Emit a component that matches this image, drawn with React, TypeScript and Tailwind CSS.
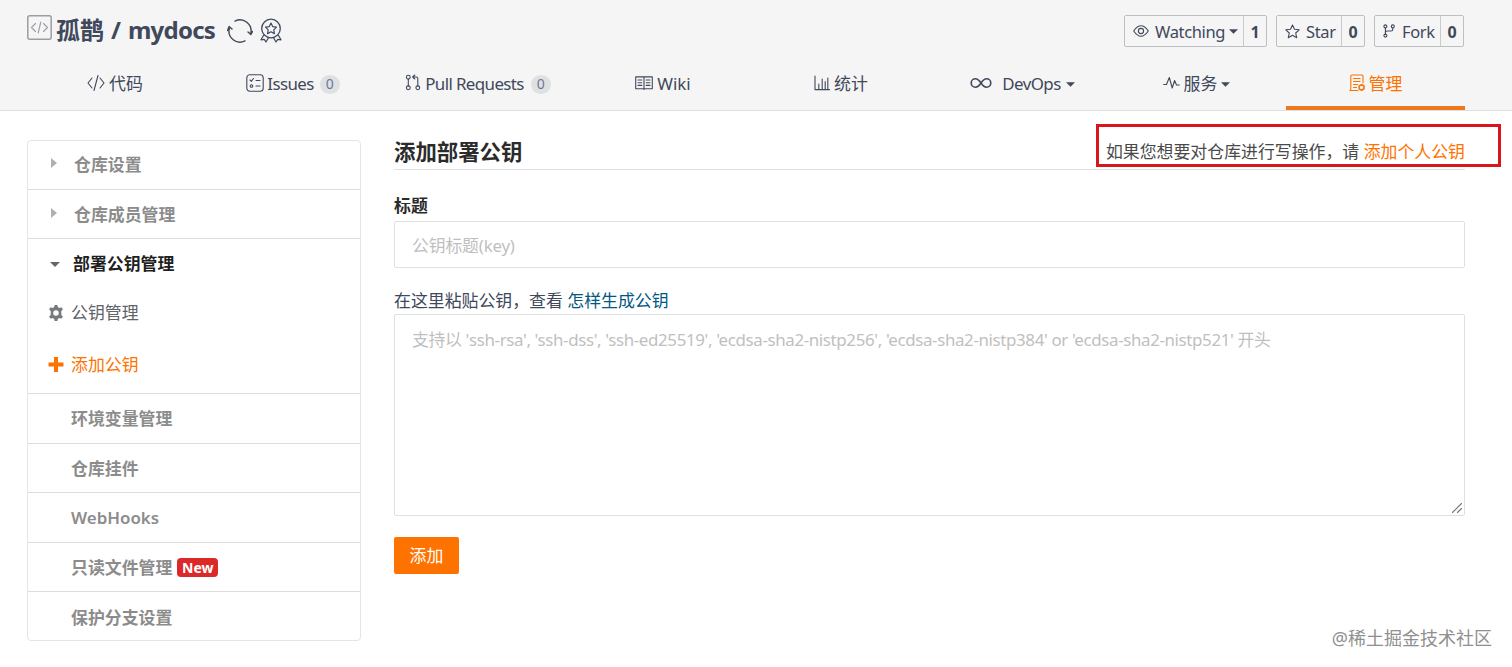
import type { ReactNode } from "react";
import clsx from "clsx";

type IconProps = { className?: string; children: ReactNode; box?: string };

function Icon({ className, children, box = "0 0 18 18" }: IconProps) {
  return (
    <svg
      viewBox={box}
      className={clsx("shrink-0", className)}
      fill="none"
      stroke="currentColor"
      strokeWidth={1.1}
      strokeLinecap="round"
      strokeLinejoin="round"
    >
      {children}
    </svg>
  );
}

const CodeIcon = () => (
  <Icon className="w-[18px] h-[18px]">
    <path d="M5 4 L1 9 L5 14 M13 4 L17 9 L13 14 M11 1.5 L7 16.5" />
  </Icon>
);

const IssuesIcon = () => (
  <Icon className="w-[18px] h-[18px]">
    <rect x="0.8" y="0.8" width="16.4" height="16.4" rx="3" />
    <path d="M4 6 L5.3 7.3 L7.5 4.5 M10 6.5 H14 M10 12 H14" />
    <circle cx="5.5" cy="12" r="1.3" />
  </Icon>
);

const PullIcon = () => (
  <Icon className="w-4 h-[17px]" box="0 0 16 17">
    <circle cx="3.3" cy="3.2" r="1.9" />
    <circle cx="3.3" cy="13.8" r="1.9" />
    <circle cx="12.8" cy="13.8" r="1.9" />
    <path d="M3.3 5.1 V11.9 M12.8 11.9 V4.5 Q12.8 3 11.3 3 H8 M9.8 1 L7.6 3 L9.8 5" />
  </Icon>
);

const WikiIcon = () => (
  <Icon className="w-[18px] h-[14px]" box="0 0 18 14">
    <path d="M0.7 0.9 H17.3 V12.8 H0.7 Z M9 0.9 V13.4 M3 4 H6.8 M3 6.7 H6.8 M3 9.4 H6.8 M11.2 4 H15 M11.2 6.7 H15 M11.2 9.4 H15" />
  </Icon>
);

const StatsIcon = () => (
  <Icon className="w-4 h-4" box="0 0 16 16">
    <path d="M1 1 V14.6 H15.5 M4.8 14 V9 M8.2 14 V4 M11.2 14 V6.5 M13.8 14 V3" />
  </Icon>
);

const DevOpsIcon = () => (
  <Icon className="w-[22px] h-3" box="0 0 22 12">
    <path
      strokeWidth={1.6}
      d="M11 6 C9 3 7.5 1.8 5.4 1.8 A4.2 4.2 0 0 0 5.4 10.2 C7.5 10.2 9 9 11 6 C13 3 14.5 1.8 16.6 1.8 A4.2 4.2 0 0 1 16.6 10.2 C14.5 10.2 13 9 11 6 Z"
    />
  </Icon>
);

const PulseIcon = () => (
  <Icon className="w-[17px] h-[14px]" box="0 0 17 14">
    <path d="M0.7 8.5 H3.5 L6.3 1.5 L9.2 12 L11.6 4.5 L13.5 9 H16.3" />
  </Icon>
);

const ManageIcon = () => (
  <Icon className="w-4 h-[18px]" box="0 0 16 18">
    <path d="M14 9 V2 Q14 1 13 1 H2.8 Q1.8 1 1.8 2 V15 Q1.8 16.5 0.8 16.5 H9 M4.5 4.5 H11 M4.5 7.5 H11 M4.5 10.5 H8.5 M4.5 13.5 H7.5" />
    <path strokeWidth={1.6} d="M12.6 10.6 L15 12 V14.8 L12.6 16.2 L10.2 14.8 V12 Z" />
  </Icon>
);

const Caret = ({ className = "w-[9px] h-[5px]" }: { className?: string }) => (
  <svg viewBox="0 0 10 5" className={clsx("shrink-0", className)} fill="currentColor">
    <path d="M0 0 H10 L5 5 Z" />
  </svg>
);

const tabs = [
  { icon: <CodeIcon />, label: "代码", width: "w-[178px]", gap: "gap-1" },
  { icon: <IssuesIcon />, label: "Issues", width: "w-[178px]", gap: "gap-[3px]", text: "tracking-[-0.6px]", count: 0 },
  { icon: <PullIcon />, label: "Pull Requests", width: "w-[192px]", gap: "gap-1", text: "tracking-[-0.6px]", count: 0 },
  { icon: <WikiIcon />, label: "Wiki", width: "w-[178px]", gap: "gap-1" },
  { icon: <StatsIcon />, label: "统计", width: "w-[178px]", gap: "gap-1" },
  { icon: <DevOpsIcon />, label: "DevOps", width: "w-[183px] pl-0.5", gap: "gap-[5px]", text: "ml-[5px] tracking-[-0.55px]", caret: true },
  { icon: <PulseIcon />, label: "服务", width: "w-[173px] pr-1.5", gap: "gap-1", caret: true },
  { icon: <ManageIcon />, label: "管理", width: "w-[179px]", gap: "gap-1", active: true },
];

function CountButton({
  icon,
  label,
  count,
  className,
  caret,
}: {
  icon: ReactNode;
  label: string;
  count: number;
  className: string;
  caret?: boolean;
}) {
  return (
    <div className={clsx("flex h-8 rounded-xs border border-[#bcbfc3] text-[#40485b]", className)}>
      <button className="flex flex-1 items-center pl-2 whitespace-nowrap">
        {icon}
        <span className="mt-0.5 ml-1.5 text-[16.5px] tracking-[-0.35px]">{label}</span>
        {caret && <Caret className="ml-1 h-[5px] w-[9px]" />}
      </button>
      <span className="flex w-[23px] items-center justify-center border-l border-[#c8cacd] pt-0.5 text-[16px] font-bold">
        {count}
      </span>
    </div>
  );
}

function SideItem({ label, badge, arrow }: { label: string; badge?: string; arrow?: boolean }) {
  return (
    <li className="flex h-[49.5px] items-center border-b border-[#dcddde] pt-0.5 font-semibold text-[#8c8c8c] last:border-b-0">
      {arrow ? (
        <>
          <svg viewBox="0 0 6 10" className="mr-[17px] ml-[23px] h-2.5 w-1.5 -translate-y-0.5" fill="#b0b0b0">
            <path d="M0 0 L6 5 L0 10 Z" />
          </svg>
          <span>{label}</span>
        </>
      ) : (
        <span className="ml-[43px]">{label}</span>
      )}
      {badge && (
        <span className="ml-[5px] flex h-[19px] w-[41px] items-center justify-center rounded bg-[#db2828] text-[14px] font-bold text-white">
          {badge}
        </span>
      )}
    </li>
  );
}

export default function App() {
  return (
    <div className="relative h-[667px] w-[1512px] overflow-hidden bg-white font-['Noto_Sans','Noto_Sans_CJK_SC',sans-serif] text-[16.9px] leading-6 text-[#40485b]">
      <header className="flex h-[111px] flex-col border-b border-[#dfe0e2] bg-[#f5f5f5]">
        <div className="flex h-[60px] justify-between pr-12 pl-[27px]">
          <div className="flex items-start">
            <Icon className="mt-[15px] h-[25px] w-[25px] text-[#9a9da3]" box="0 0 25 25">
              <rect x="0.8" y="0.8" width="23.4" height="23.4" rx="2" strokeWidth={1.5} />
              <path d="M8.5 8.5 L4.5 12.5 L8.5 16.5 M16.5 8.5 L20.5 12.5 L16.5 16.5 M13.8 7 L11.2 18" />
            </Icon>
            <h1 className="mt-[14px] ml-1 flex items-center gap-[7px] text-[24px] leading-8 font-bold whitespace-nowrap">
              <span>孤鹊</span>
              <span>/</span>
              <span className="tracking-[-0.75px]">mydocs</span>
            </h1>
            <Icon className="mt-[18px] ml-3 h-[26px] w-[26px]" box="0 0 26 26">
              <path
                strokeWidth={1.4}
                d="M8 3.1 A11 11 0 0 1 23.7 15.5 M21 14 L23.9 16.5 L25.5 13.4 M18 22.9 A11 11 0 0 1 2.3 10.5 M0.5 12.6 L2.1 8.5 L5 11"
              />
            </Icon>
            <Icon className="mt-[18px] ml-[7px] h-[25px] w-[22px]" box="0 0 22 25">
              <circle cx="11" cy="10.5" r="9.3" strokeWidth={1.3} />
              <path
                strokeWidth={1.2}
                d="M11 5 L12.7 8.6 L16.5 9.1 L13.8 11.8 L14.4 15.6 L11 13.8 L7.6 15.6 L8.2 11.8 L5.5 9.1 L9.3 8.6 Z M3.5 17.5 L1 21.8 L4.2 21.3 L6 24 L8.5 19.8 M18.5 17.5 L21 21.8 L17.8 21.3 L16 24 L13.5 19.8"
              />
            </Icon>
          </div>
          <div className="mt-[15px] flex gap-[9px]">
            <CountButton
              className="w-[143px]"
              label="Watching"
              count={1}
              caret
              icon={
                <Icon className="h-3 w-4" box="0 0 16 12">
                  <path d="M0.7 6 Q8 -4.5 15.3 6 Q8 16.5 0.7 6 Z" />
                  <circle cx="8" cy="6" r="2.6" />
                </Icon>
              }
            />
            <CountButton
              className="w-[89px]"
              label="Star"
              count={0}
              icon={
                <Icon className="h-[15px] w-[15px]" box="0 0 15 15">
                  <path d="M7.5 1 L9.5 5.3 L14.2 5.8 L10.7 9 L11.7 13.7 L7.5 11.3 L3.3 13.7 L4.3 9 L0.8 5.8 L5.5 5.3 Z" />
                </Icon>
              }
            />
            <CountButton
              className="w-[90px]"
              label="Fork"
              count={0}
              icon={
                <Icon className="mr-px h-3.5 w-3" box="0 0 12 14">
                  <circle cx="2.4" cy="2.4" r="1.5" />
                  <circle cx="9.8" cy="2.4" r="1.5" />
                  <circle cx="2.4" cy="11.6" r="1.5" />
                  <path d="M2.4 4 V10 M9.8 4 V5.2 Q9.8 7 8 7 H4.2 Q2.4 7 2.4 8.5" />
                </Icon>
              }
            />
          </div>
        </div>
        <nav className="flex pl-[26px]">
          {tabs.map((tab) => (
            <a
              key={tab.label}
              className={clsx(
                "flex h-[51px] shrink-0 items-center justify-center border-b-4 whitespace-nowrap",
                tab.width,
                tab.gap,
                tab.active ? "border-[#ec7a1c] text-[#fe7300]" : "border-transparent",
              )}
            >
              {tab.icon}
              <span className={clsx("mt-[3px]", tab.text)}>{tab.label}</span>
              {tab.count !== undefined && (
                <span className="mt-[3px] ml-[3px] flex h-[19px] w-5 items-center justify-center rounded-full bg-[#dfe0e2] text-[14px] text-[#6b7a99]">
                  {tab.count}
                </span>
              )}
              {tab.caret && <Caret className="mt-[3px] h-[5px] w-[9px]" />}
            </a>
          ))}
        </nav>
      </header>

      <main className="flex pt-[29px] pl-[27px]">
        <aside className="h-[501px] w-[334px] shrink-0 rounded border border-[#e4e5e6]">
          <ul className="-mt-px">
            <SideItem label="仓库设置" arrow />
            <SideItem label="仓库成员管理" arrow />
            <li className="h-[155px] border-b border-[#dcddde]">
              <div className="flex h-[50px] items-center font-bold text-[#1f1f1f]">
                <Caret className="mr-[13px] ml-[22px] h-[5px] w-2.5 text-[#666]" />
                部署公钥管理
              </div>
              <div className="flex h-12 items-center text-[#5f6368]">
                <svg viewBox="0 0 16 16" className="mr-[7px] ml-5 h-4 w-4 text-[#777b80]" fill="currentColor" fillRule="evenodd">
                  <path d="M6.6 0 H9.4 L9.8 2.1 L11.3 2.9 L13.4 2.2 L14.9 4.6 L13.3 6.1 V9.9 L14.9 11.4 L13.4 13.8 L11.3 13.1 L9.8 13.9 L9.4 16 H6.6 L6.2 13.9 L4.7 13.1 L2.6 13.8 L1.1 11.4 L2.7 9.9 V6.1 L1.1 4.6 L2.6 2.2 L4.7 2.9 L6.2 2.1 Z M8 5.2 A2.8 2.8 0 1 0 8 10.8 A2.8 2.8 0 1 0 8 5.2 Z" />
                </svg>
                公钥管理
              </div>
              <div className="flex h-[56px] items-center text-[#fe7300]">
                <svg viewBox="0 0 16 16" className="mr-[7px] ml-5 h-4 w-4" fill="currentColor">
                  <path d="M6 0 H10 V5.5 H15.5 V9.5 H10 V15 H6 V9.5 H0.5 V5.5 H6 Z" />
                </svg>
                添加公钥
              </div>
            </li>
            <SideItem label="环境变量管理" />
            <SideItem label="仓库挂件" />
            <SideItem label="WebHooks" />
            <SideItem label="只读文件管理" badge="New" />
            <SideItem label="保护分支设置" />
          </ul>
        </aside>

        <section className="ml-[33px] w-[1071px]">
          <div className="flex h-[30px] items-center justify-between border-b border-[#dfe0e2] pb-1.5">
            <h2 className="text-[21.4px] font-bold text-[#2b2b2b]">添加部署公钥</h2>
            <p className="text-[#4a4a4a]">
              如果您想要对仓库进行写操作，请 <a className="text-[#fe7300]">添加个人公钥</a>
            </p>
          </div>
          <label className="mt-6 block font-bold text-[#2b2b2b]">标题</label>
          <input
            className="mt-[3px] block h-[47px] w-full rounded-xs border border-[#dfe0e2] px-[17px] pt-0.5 tracking-[-0.2px] outline-none placeholder:text-[#bfbfbf]"
            placeholder="公钥标题(key)"
          />
          <p className="mt-[21px]">
            在这里粘贴公钥，查看 <a className="text-[#005980]">怎样生成公钥</a>
          </p>
          <div className="relative mt-px">
            <textarea
              className="block h-[202px] w-full resize-none rounded-xs border border-[#dfe0e2] px-[17px] py-[13px] tracking-[-0.36px] outline-none placeholder:text-[#bfbfbf]"
              placeholder="支持以 'ssh-rsa', 'ssh-dss', 'ssh-ed25519', 'ecdsa-sha2-nistp256', 'ecdsa-sha2-nistp384' or 'ecdsa-sha2-nistp521' 开头"
            />
            <Icon className="absolute right-[3px] bottom-[3px] h-2.5 w-2.5 text-[#777]" box="0 0 10 10">
              <path d="M0.5 9.5 L9.5 0.5 M5.5 9.5 L9.5 5.5" />
            </Icon>
          </div>
          <button className="mt-[21px] h-[37px] w-[65px] rounded-xs bg-[#fe7300] text-white">添加</button>
        </section>
      </main>

      <div className="absolute top-[124px] left-[1096px] h-[43px] w-[405px] border-3 border-[#d9161c]" />
      <div className="absolute right-5 bottom-[17px] text-[18px] text-[#8f8f8f]">@稀土掘金技术社区</div>
    </div>
  );
}
